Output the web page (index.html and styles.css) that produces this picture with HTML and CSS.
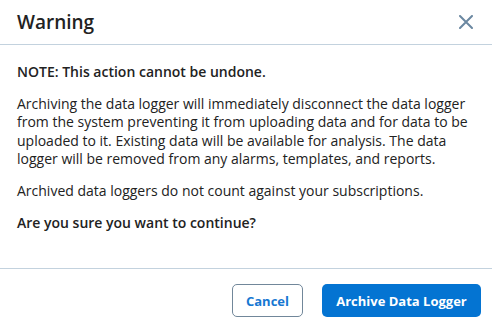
FILE: index.html
```html
<!DOCTYPE html>
<html lang="en">
<head>
    <meta charset="UTF-8">
    <meta name="viewport" content="width=device-width, initial-scale=1.0">
    <title>Warning</title>
    <link rel="stylesheet" href="styles.css">
</head>
<body>
    <div class="modal">
        <div class="modal-header">
            <h1>Warning</h1>
            <button class="close-btn" aria-label="Close">
                <svg width="14" height="14" viewBox="0 0 14 14">
                    <path d="M1 1 L13 13 M13 1 L1 13" stroke="#6b88a1" stroke-width="2" stroke-linecap="round"/>
                </svg>
            </button>
        </div>

        <div class="modal-body">
            <p class="strong">NOTE: This action cannot be undone.</p>
            <p>Archiving the data logger will immediately disconnect the data logger from the system preventing it from uploading data and for data to be uploaded to it. Existing data will be available for analysis. The data logger will be removed from any alarms, templates, and reports.</p>
            <p>Archived data loggers do not count against your subscriptions.</p>
            <p class="strong">Are you sure you want to continue?</p>
        </div>

        <div class="modal-footer">
            <button class="btn btn-outline">Cancel</button>
            <button class="btn btn-primary">Archive Data Logger</button>
        </div>
    </div>
</body>
</html>
```

FILE: styles.css
```css
* {
    margin: 0;
    padding: 0;
    box-sizing: border-box;
}

body {
    font-family: 'Open Sans', 'Liberation Sans', sans-serif;
    background: #fff;
    color: #222;
}

.modal {
    width: 492px;
    height: 330px;
    display: flex;
    flex-direction: column;
}

.modal-header {
    height: 45px;
    display: flex;
    align-items: center;
    justify-content: space-between;
    padding: 0 19px 0 17px;
    border-bottom: 1px solid #c3d2de;
}

h1 {
    font-size: 19px;
    font-weight: 600;
    color: #222;
}

.close-btn {
    background: none;
    border: none;
    width: 14px;
    height: 14px;
    display: flex;
    cursor: pointer;
}

.modal-body {
    flex: 1;
    padding: 18px 17px 0 17px;
    font-size: 14px;
    line-height: 18.2px;
}

.modal-body p {
    margin-bottom: 14px;
}

.strong {
    font-weight: 600;
}

.modal-footer {
    border-top: 1px solid #c3d2de;
    display: flex;
    justify-content: flex-end;
    gap: 19px;
    padding: 15px 11px 13px 0;
}

.btn {
    height: 33px;
    border-radius: 5px;
    font-family: inherit;
    font-size: 13px;
    font-weight: 700;
    padding: 0;
    white-space: nowrap;
    cursor: pointer;
}

.btn-outline {
    background: #fff;
    color: #1778d2;
    border: 1px solid #71879a;
    width: 71px;
}

.btn-primary {
    background: #0474d2;
    color: #fff;
    border: none;
    width: 159px;
}
```
